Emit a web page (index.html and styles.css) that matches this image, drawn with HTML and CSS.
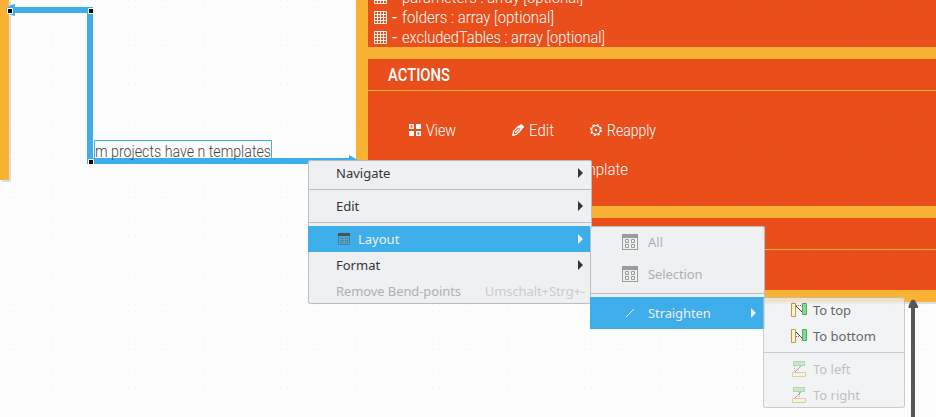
FILE: index.html
```html
<!DOCTYPE html>
<html lang="en">
<head>
<meta charset="utf-8">
<title>Model diagram</title>
<link rel="stylesheet" href="styles.css">
</head>
<body>
<svg class="defs" width="0" height="0" aria-hidden="true">
  <defs>
    <symbol id="table" viewBox="0 0 13 13"><path d="M.5 .5h12v12H.5zM3.5 0v13M6.5 0v13M9.5 0v13M0 3.5h13M0 6.5h13M0 9.5h13" fill="none" stroke="#fff" stroke-opacity=".9"/></symbol>
    <symbol id="grid-box" viewBox="0 0 16 16"><path d="M0 0h16v16H0zM1 4v11h14V4z" fill-rule="evenodd" fill="#9c9c9c"/><path d="M3.5 5.5h3v3h-3zM9.5 5.5h3v3h-3zM3.5 10.5h3v3h-3zM9.5 10.5h3v3h-3z" fill="none" stroke="#9c9c9c"/></symbol>
    <symbol id="arrow" viewBox="0 0 5 10"><path d="M0 0v10l5-5z" fill="currentColor"/></symbol>
    <symbol id="vert" viewBox="0 0 16 14"><path d="M.5 .5h4v13h-4z" fill="#fff3b5" stroke="#a87820"/><path d="M11.5 .5h4v11h-4z" fill="#55d870" stroke="#2f8a3a"/><path d="M5 3l6 6" stroke="#000"/></symbol>
    <symbol id="horiz" viewBox="0 0 14 16"><path d="M1.500 .5h11v4h-11z" fill="#70df85" stroke="#4f9c57"/><path d="M.5 11.500h13v4H.5z" fill="#fff0b5" stroke="#b58a32"/><path d="M3 11l6-6" stroke="#222"/></symbol>
    <pattern id="dots" x="14" y="7" width="38" height="38" patternUnits="userSpaceOnUse"><path d="M0 .5h38M.5 0v38" stroke="#888" stroke-opacity=".09" stroke-dasharray="1 5.333"/></pattern>
  </defs>
</svg>
<main class="canvas">
  <div class="node node-left"></div>
  <section class="node node-main">
    <div class="panel fields">
      <div class="field"><svg width="13" height="13"><use href="#table"/></svg><svg class="label dash" width="5" height="20"><text y="16" textLength="5" lengthAdjust="spacingAndGlyphs">-</text></svg><svg class="label" width="181" height="20"><text y="16" textLength="181" lengthAdjust="spacingAndGlyphs">parameters : array [optional]</text></svg></div>
      <div class="field"><svg width="13" height="13"><use href="#table"/></svg><svg class="label dash" width="5" height="20"><text y="16" textLength="5" lengthAdjust="spacingAndGlyphs">-</text></svg><svg class="label" width="152" height="20"><text y="16" textLength="152" lengthAdjust="spacingAndGlyphs">folders : array [optional]</text></svg></div>
      <div class="field"><svg width="13" height="13"><use href="#table"/></svg><svg class="label dash" width="5" height="20"><text y="16" textLength="5" lengthAdjust="spacingAndGlyphs">-</text></svg><svg class="label" width="203" height="20"><text y="16" textLength="203" lengthAdjust="spacingAndGlyphs">excludedTables : array [optional]</text></svg></div>
    </div>
    <div class="panel actions">
      <header><svg class="label title" width="62" height="24"><text y="18" textLength="62" lengthAdjust="spacingAndGlyphs">ACTIONS</text></svg></header>
      <div class="buttons">
        <div class="button view"><svg width="12" height="12"><path d="M.75.75h3.500v3.500H.75zM7.750 7.750h3.500v3.500h-3.500z" fill="none" stroke="#fff" stroke-width="1.500"/><path d="M7 0h5v5H7zM0 7h5v5H0z" fill="#fff"/></svg><svg class="label" width="30" height="20"><text y="16" textLength="30" lengthAdjust="spacingAndGlyphs">View</text></svg></div>
        <div class="button edit"><svg width="12" height="12"><path d="M.8 11.200l.8-4 4.800-4.700 3 3-4.800 4.800zM3.200 8.800l3.800-3.800" fill="none" stroke="#fff" stroke-width="1.300"/><path d="M6.500 2.200L8.700.2h1L11.800 2.300v1L9.700 5.500z" fill="#fff"/></svg><svg class="label" width="25" height="20"><text y="16" textLength="25" lengthAdjust="spacingAndGlyphs">Edit</text></svg></div>
        <div class="button"><svg width="12" height="12"><circle cx="6" cy="6" r="4.300" fill="none" stroke="#fff" stroke-width="1.200"/><circle cx="6" cy="6" r="5.300" fill="none" stroke="#fff" stroke-width="1.400" stroke-dasharray="2.080 2.080"/><circle cx="6" cy="6" r="1.200" fill="#fff"/></svg><svg class="label" width="49" height="20"><text y="16" textLength="49" lengthAdjust="spacingAndGlyphs">Reapply</text></svg></div>
      </div>
      <div class="second"><svg class="label" width="58" height="20"><text y="16" textLength="58" lengthAdjust="spacingAndGlyphs">template</text></svg></div>
    </div>
    <div class="panel extra"><header></header></div>
  </section>
  <svg class="overlay" width="936" height="417">
    <rect width="936" height="417" fill="url(#dots)"/>
    <path d="M9 10H90V161H350" fill="none" stroke="#3daee9" stroke-width="6"/>
    <path d="M6 9l5-4 4-1v12l-4-1-5-4zM349 155l9 5-9 4z" fill="#3daee9"/>
    <path d="M94.500 158V140.500h177V158" fill="none" stroke="#3daee9"/>
    <text class="edge-text" x="95" y="157" textLength="176" lengthAdjust="spacingAndGlyphs">m projects have n templates</text>
    <g fill="#000" stroke="#fff"><path d="M7.500 8.500h5v5h-5zM88.500 8.500h5v5h-5zM88.500 159.500h5v5h-5z"/></g>
    <path d="M911 417V308h-2.500v-2l2.500-5.500 2-1 2 1 3 5.500v2H915v109z" fill="#575756"/>
  </svg>

  <nav class="menu menu-main">
    <div class="item">Navigate<svg class="arrow"><use href="#arrow"/></svg></div>
    <div class="separator"></div>
    <div class="item">Edit<svg class="arrow"><use href="#arrow"/></svg></div>
    <div class="separator"></div>
    <div class="item selected"><svg class="layout-icon" width="12" height="12"><path d="M0 0h12v3H0z" fill="#47535b"/><path d="M.5 3v8.500h11V3" fill="#54a3c9" stroke="#4c819c"/><path d="M2.500 5.500h3m1.500 0h3M2.500 7.500h3m1.500 0h3M2.500 9.500h3m1.500 0h3" stroke="#416b80" stroke-dasharray="1 1"/></svg>Layout<svg class="arrow"><use href="#arrow"/></svg></div>
    <div class="item">Format<svg class="arrow"><use href="#arrow"/></svg></div>
    <div class="item disabled tight">Remove Bend-points<span class="shortcut">Umschalt+Strg+-</span></div>
  </nav>
  <nav class="menu menu-layout">
    <div class="item disabled"><svg width="16" height="16"><use href="#grid-box"/></svg>All</div>
    <div class="item disabled tight"><svg width="16" height="16"><use href="#grid-box"/></svg>Selection</div>
    <div class="separator"></div>
    <div class="item selected tight"><svg width="16" height="16"><path d="M4 12l8-8" stroke="#eff0f1"/></svg>Straighten<svg class="arrow"><use href="#arrow"/></svg></div>
  </nav>
  <nav class="menu menu-straighten">
    <div class="item"><svg width="16" height="14"><use href="#vert"/><path d="M5 2.500h6" stroke="#f00" stroke-dasharray="1 1"/></svg>To top</div>
    <div class="item"><svg width="16" height="14"><use href="#vert"/><path d="M5 7.500h6" stroke="#f00" stroke-dasharray="1 1"/></svg>To bottom</div>
    <div class="separator"></div>
    <div class="item faded"><svg width="16" height="16"><use href="#horiz" x="1" width="14" height="16"/><path d="M3.500 5v6" stroke="#f00" stroke-dasharray="1 1"/></svg><span>To left</span></div>
    <div class="item faded"><svg width="16" height="16"><use href="#horiz" x="1" width="14" height="16"/><path d="M8.500 5v6" stroke="#f00" stroke-dasharray="1 1"/></svg><span>To right</span></div>
  </nav>
</main>
</body>
</html>
```
FILE: styles.css
```css
* { box-sizing: border-box; }
body { margin: 0; font: 13px/26px "Noto Sans", sans-serif; color: #31363b; }
svg { display: block; flex: none; }
.defs { position: absolute; }
.canvas { position: relative; width: 936px; height: 417px; overflow: hidden; background: #fdfdfd; }
.node { position: absolute; background: #f9b233; box-shadow: 2px 2px 0 #dedede; }
.node-left { left: 0; top: 0; width: 9px; height: 180px; }
.node-main { left: 356px; top: 0; width: 620px; height: 302px; padding: 0 12px 12px; display: flex; flex-direction: column; gap: 12px; }
.panel { background: #e94e1b; overflow: hidden; }
.fields { height: 47px; display: flex; flex-direction: column; justify-content: flex-end; }
.field { height: 20px; flex: none; display: flex; align-items: center; padding-left: 6px; gap: 5px; }
.label { overflow: visible; font: 300 16px Roboto, sans-serif; fill: #fff; }
.dash { font-weight: 400; }
.title { font-size: 17.5px; font-weight: 500; }
.edge-text { font: 300 16px Roboto, sans-serif; fill: #444; }
.actions { height: 147px; }
.panel header { height: 32px; border-bottom: 1px solid #f9b233; padding: 4px 20px; }
.buttons { display: flex; padding: 29px 0 0 41px; }
.button { display: flex; align-items: center; gap: 5px; height: 20px; }
.button.view { width: 103px; }
.button.edit { width: 78px; }
.second { padding: 19px 0 0 202px; }
.extra { height: 72px; }
.overlay { position: absolute; left: 0; top: 0; }
.menu { position: absolute; background: #eff0f2; border-radius: 3px; box-shadow: inset 0 0 0 1px #bcbebf; }
.menu-main { left: 308px; top: 160px; width: 284px; }
.menu-layout { left: 590px; top: 226px; width: 175px; }
.menu-straighten { left: 763px; top: 297px; width: 142px; opacity: .76; }
.item { height: 26px; display: flex; align-items: center; padding-left: 28px; padding-right: 9px; white-space: nowrap; }
.menu-layout .item { height: 32px; padding-left: 32px; padding-right: 9px; gap: 10px; }
.menu-straighten .item { padding-left: 28px; gap: 6px; }
.separator { height: 7px; border-bottom: 3px solid transparent; padding-top: 3px; background: #bcbebf content-box; }
.arrow { width: 5px; height: 10px; margin-left: auto; }
.selected { background: #3daee9; color: #eff0f1; }
.menu-main .selected { margin-right: 2px; padding-right: 7px; padding-left: 30px; }
.layout-icon { margin-right: 8px; }
.disabled { color: #aeb0b2; }
.tight { letter-spacing: -.1px; }
.shortcut { margin-left: 24px; color: #c9cbcd; }
.faded svg { opacity: .5; }
.faded span { opacity: .36; }
```
